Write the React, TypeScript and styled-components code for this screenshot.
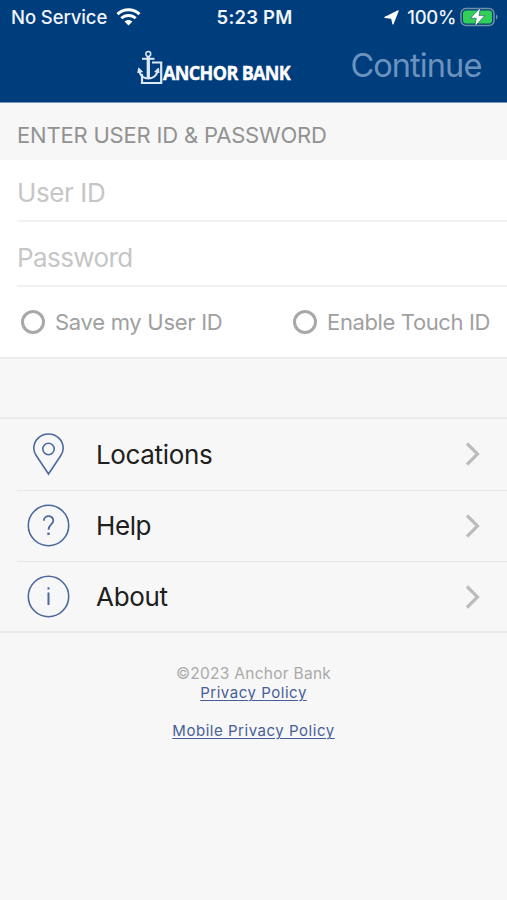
import React from 'react';
import styled, { createGlobalStyle } from 'styled-components';

const GlobalStyle = createGlobalStyle`
  * { box-sizing: border-box; }
  body { margin: 0; background: #f7f7f7; font-family: Inter, sans-serif; }
  svg { display: block; flex: none; }
`;

const Screen = styled.main`
  width: 507px;
  height: 900px;
  overflow: hidden;
  background: #f7f7f7;
`;

const Header = styled.header`
  height: 103px;
  background: #003d7d;
  border-bottom: 1px solid #7897b8;
  color: #f0f5fc;
`;

const StatusBar = styled.div`
  height: 34px;
  display: grid;
  grid-template-columns: 1fr auto 1fr;
  align-items: center;
  padding: 0 9px 0 11px;
`;

const StatusGroup = styled.div<{ $end?: boolean }>`
  display: flex;
  align-items: center;
  justify-content: ${p => (p.$end ? 'flex-end' : 'flex-start')};
`;

const StatusText = styled.span<{ $bold?: boolean; $spacing: number }>`
  font-size: 18.5px;
  line-height: 34px;
  font-weight: ${p => (p.$bold ? 600 : 500)};
  letter-spacing: ${p => p.$spacing}px;
  white-space: nowrap;
`;

const WifiIcon = styled.svg`
  margin-left: 9px;
`;

const ArrowIcon = styled.svg`
  margin-right: 8px;
`;

const BatteryIcon = styled.svg`
  margin-left: 4px;
`;

const NavBar = styled.div`
  height: 68px;
  display: flex;
  align-items: flex-start;
  padding: 14px 25px 0 137px;
`;

const Brand = styled.div`
  display: flex;
  align-items: flex-start;
  padding-top: 2px;
`;

const BrandName = styled.span`
  margin-top: 10px;
  font: 700 19.5px/26px "Open Sans", sans-serif;
  letter-spacing: -0.7px;
  color: #fff;
  -webkit-text-stroke: 0.4px #fff;
  white-space: nowrap;
  transform: scaleX(0.923);
  transform-origin: left;
`;

const ContinueButton = styled.button`
  margin-left: auto;
  margin-right: 0.5px;
  padding: 0;
  border: 0;
  background: none;
  font: 400 32.5px/36px Inter, sans-serif;
  letter-spacing: -0.9px;
  color: #6d93bd;
`;

const SectionTitle = styled.h1`
  margin: 0;
  height: 57px;
  padding: 4px 17px 0;
  font-size: 22px;
  line-height: 56px;
  font-weight: 400;
  letter-spacing: -0.19px;
  color: #929292;
`;

const Form = styled.form`
  height: 199px;
  background: #fff;
  border-bottom: 2px solid #ededed;
`;

const Field = styled.input`
  display: block;
  width: 490px;
  height: 65px;
  margin-left: 17px;
  padding: 7px 0 0;
  border: 0;
  border-bottom: 2px solid #f1f1f1;
  border-radius: 0;
  outline: 0;
  background: none;
  font: 400 26px Inter, sans-serif;
  letter-spacing: -0.6px;
  &:first-child { height: 62px; padding-top: 5px; letter-spacing: -0.4px; }
  &::placeholder { color: #c6c6c6; opacity: 1; }
`;

const Options = styled.div`
  display: flex;
  justify-content: space-between;
  height: 70px;
  padding: 0 17px 0 21px;
`;

const Option = styled.label<{ $spacing: number }>`
  display: flex;
  align-items: center;
  gap: 10px;
  font-size: 22px;
  letter-spacing: ${p => p.$spacing}px;
  color: #a0a0a0;
  white-space: nowrap;
`;

const Radio = styled.span`
  width: 24px;
  height: 24px;
  border: 3px solid #a8a8a8;
  border-radius: 50%;
`;

const Menu = styled.nav`
  margin-top: 58px;
  border-top: 2px solid #ebebeb;
  border-bottom: 2px solid #ebebeb;
`;

const MenuRow = styled.a`
  display: flex;
  align-items: center;
  height: 71px;
  margin-left: 17px;
  padding: 0 27px 1px 10px;
  border-bottom: 1px solid #e7e7e7;
  &:first-child { height: 72px; }
  &:last-child { border-bottom: 0; height: 69px; padding-bottom: 0; }
`;

const MenuLabel = styled.span<{ $spacing: number }>`
  flex: 1;
  margin-left: 26px;
  font-size: 26px;
  letter-spacing: ${p => p.$spacing}px;
  color: #202020;
`;

const LineIcon = styled.svg`
  fill: none;
  stroke: #4b699f;
  stroke-width: 1.6;
`;

const Footer = styled.footer`
  display: flex;
  flex-direction: column;
  align-items: center;
  padding-top: 31px;
  font-size: 15.5px;
  line-height: 19px;
  color: #a9a9a9;
`;

const Copyright = styled.span`
  letter-spacing: 0.27px;
`;

const FooterLink = styled.a<{ $gap?: boolean }>`
  margin-top: ${p => (p.$gap ? 19 : 0)}px;
  font-size: 15px;
  letter-spacing: 0.53px;
  color: #475f98;
  text-decoration: underline;
  text-decoration-thickness: 1px;
  text-underline-offset: 2px;
`;

const Anchor = () => (
  <svg width="26" height="36" viewBox="0 0 26 36" fill="none" stroke="#dce8f3">
    <path d="M15 12.5H24.2V33H5V24" strokeWidth="2.2" />
    <circle cx="11.3" cy="4" r="2.4" strokeWidth="1.5" />
    <path d="M5 8.8H17.5" strokeWidth="2" />
    <path d="M11.3 6.5V29" strokeWidth="3.3" />
    <path d="M2.5 21C4 31 18.5 31 20.5 21" strokeWidth="2.2" />
    <path d="M.8 23L1.6 18L5.8 22M17.5 22L21.5 18L22 23" strokeWidth="1" fill="#dce8f3" />
  </svg>
);

const Chevron = () => (
  <svg width="15" height="26" viewBox="0 0 15 26" fill="none" stroke="#bcbcbc" strokeWidth="3.2">
    <path d="M2 2.5L12.5 13L2 23.5" />
  </svg>
);

const Pin = () => (
  <LineIcon width="43" height="43" viewBox="0 0 43 43">
    <path d="M21.5 41L9.2 22.5C7.7 20.2 6.8 18 6.8 15.3A14.7 14.3 0 0 1 36.2 15.3C36.2 18 35.3 20.2 33.8 22.5Z" />
    <circle cx="21.5" cy="16" r="5.7" />
  </LineIcon>
);

const Question = () => (
  <LineIcon width="43" height="43" viewBox="0 0 43 43">
    <circle cx="21.5" cy="21.5" r="20.2" />
    <path d="M16.8 16.8C16.8 10.6 26.3 10.6 26.3 16.6C26.3 20.4 21.5 20.6 21.5 25.8" strokeWidth="1.8" />
    <path d="M21.5 28.6V31" strokeWidth="2.4" />
  </LineIcon>
);

const Info = () => (
  <LineIcon width="43" height="43" viewBox="0 0 43 43">
    <circle cx="21.5" cy="21.5" r="20.2" />
    <path d="M21.5 17.5V30M21.5 12.2V14.5" strokeWidth="2" />
  </LineIcon>
);

const menu = [
  { label: 'Locations', Icon: Pin, spacing: -0.35 },
  { label: 'Help', Icon: Question, spacing: -0.4 },
  { label: 'About', Icon: Info, spacing: -0.3 },
];

export default function App() {
  return (
    <>
      <GlobalStyle />
      <Screen>
        <Header>
          <StatusBar>
            <StatusGroup>
              <StatusText $spacing={-0.1}>No Service</StatusText>
              <WifiIcon width="25" height="18" viewBox="0 0 25 18" fill="none" stroke="#fff" strokeWidth="3">
                <path d="M1.5 6.2C7.5.4 17.5.4 23.5 6.2M5.3 10.3C9.3 6.4 15.7 6.4 19.7 10.3" />
                <path d="M12.5 17.5L8.5 13.5C10.8 11.4 14.2 11.4 16.5 13.5Z" fill="#fff" stroke="none" />
              </WifiIcon>
            </StatusGroup>
            <StatusText $bold $spacing={0.2}>5:23 PM</StatusText>
            <StatusGroup $end>
              <ArrowIcon width="15" height="15" viewBox="0 0 15 15" fill="#fff">
                <path d="M14.2.8L9 14L7.6 8.3L.8 7.4Z" stroke="#fff" strokeWidth="1.1" strokeLinejoin="round" />
              </ArrowIcon>
              <StatusText $spacing={-0.3}>100%</StatusText>
              <BatteryIcon width="38" height="20" viewBox="0 0 38 20">
                <rect x="1" y="1.5" width="33" height="17" rx="5" fill="none" stroke="#6d93a5" strokeWidth="1.5" />
                <rect x="3" y="3.5" width="29" height="13" rx="3" fill="#32cf57" />
                <path d="M36 7.5C38 8.5 38 11.5 36 12.5Z" fill="#7897b8" />
                <path d="M20.5.5L10.5 11.2H16.3L14.8 19.5L24.8 8.6H19Z" fill="#fff" stroke="#174d78" strokeWidth=".6" />
              </BatteryIcon>
            </StatusGroup>
          </StatusBar>
          <NavBar>
            <Brand>
              <Anchor />
              <BrandName>ANCHOR BANK</BrandName>
            </Brand>
            <ContinueButton>Continue</ContinueButton>
          </NavBar>
        </Header>
        <SectionTitle>ENTER USER ID &amp; PASSWORD</SectionTitle>
        <Form>
          <Field placeholder="User ID" />
          <Field placeholder="Password" type="password" />
          <Options>
            <Option $spacing={-0.28}><Radio />Save my User ID</Option>
            <Option $spacing={-0.38}><Radio />Enable Touch ID</Option>
          </Options>
        </Form>
        <Menu>
          {menu.map(({ label, Icon, spacing }) => (
            <MenuRow key={label}>
              <Icon />
              <MenuLabel $spacing={spacing}>{label}</MenuLabel>
              <Chevron />
            </MenuRow>
          ))}
        </Menu>
        <Footer>
          <Copyright>©2023 Anchor Bank</Copyright>
          <FooterLink>Privacy Policy</FooterLink>
          <FooterLink $gap>Mobile Privacy Policy</FooterLink>
        </Footer>
      </Screen>
    </>
  );
}
